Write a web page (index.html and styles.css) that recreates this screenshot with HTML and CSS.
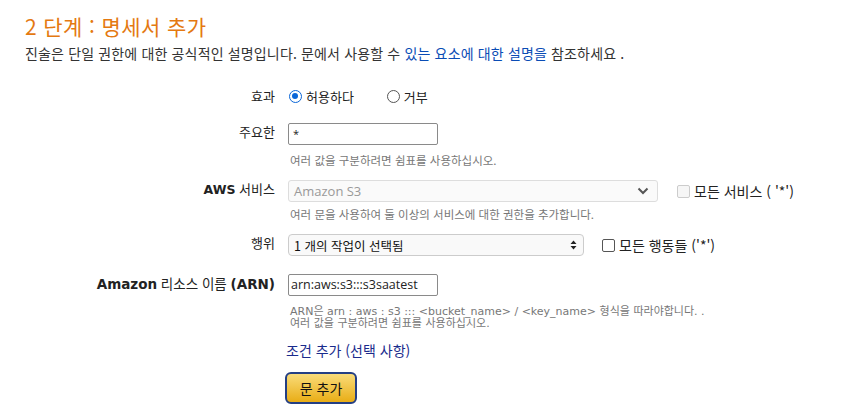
FILE: index.html
```html
<!DOCTYPE html>
<html lang="ko">
<head>
<meta charset="utf-8">
<link rel="stylesheet" href="styles.css">
</head>
<body>
<div class="page">
  <h1 class="title">2 단계 : 명세서 추가</h1>
  <p class="desc">진술은 단일 권한에 대한 공식적인 설명입니다. 문에서 사용할 수 <a class="desc-link">있는 요소에 대한 설명을</a> 참조하세요 .</p>

  <div class="form">
    <div class="row row-effect">
      <div class="label">효과</div>
      <div class="field radios">
        <span class="radio checked"></span><span class="radio-text">허용하다</span>
        <span class="radio deny"></span><span class="radio-text">거부</span>
      </div>
    </div>

    <div class="row row-principal">
      <div class="label">주요한</div>
      <div class="field">
        <div class="input"><span class="star">*</span></div>
        <div class="hint hint-1">여러 값을 구분하려면 쉼표를 사용하십시오.</div>
      </div>
    </div>

    <div class="row row-service">
      <div class="label"><b>AWS</b> 서비스</div>
      <div class="field">
        <div class="inline">
          <div class="select select-disabled">
            <span>Amazon S3</span>
            <svg width="12" height="8" viewBox="0 0 12 8"><path d="M1.5 1.5 L6 6 L10.5 1.5" fill="none" stroke="#555" stroke-width="2"/></svg>
          </div>
          <span class="check check-disabled"></span><span class="check-text">모든 서비스 ( '*')</span>
        </div>
        <div class="hint hint-2">여러 문을 사용하여 둘 이상의 서비스에 대한 권한을 추가합니다.</div>
      </div>
    </div>

    <div class="row row-action">
      <div class="label">행위</div>
      <div class="field">
        <div class="inline">
          <div class="select select-action">
            <span>1 개의 작업이 선택됨</span>
            <svg width="7" height="10" viewBox="0 0 7 10"><path d="M3.5 0.5 L6.5 4 L0.5 4 Z M3.5 9.5 L6.5 6 L0.5 6 Z" fill="#222"/></svg>
          </div>
          <span class="check check-action"></span><span class="check-text">모든 행동들 ('*')</span>
        </div>
      </div>
    </div>

    <div class="row row-arn">
      <div class="label"><b>Amazon</b> 리소스 이름 <b>(ARN)</b></div>
      <div class="field">
        <div class="input arn-input">arn:aws:s3:::s3saatest</div>
        <div class="hint hint-arn">ARN은 arn : aws : s3 ::: &lt;bucket_name&gt; / &lt;key_name&gt; 형식을 따라야합니다. .<br>여러 값을 구분하려면 쉼표를 사용하십시오.</div>
        <a class="cond">조건 추가 (선택 사항)</a>
        <button class="btn">문 추가</button>
      </div>
    </div>
  </div>
</div>
</body>
</html>
```

FILE: styles.css
```css
* { box-sizing: border-box; }
html, body { margin: 0; padding: 0; background: #fff; }
body {
  font-family: "Noto Sans CJK KR", "Noto Sans", sans-serif;
  color: #222;
  width: 864px;
  height: 420px;
  overflow: hidden;
}
.page { padding: 13px 0 0 25px; }
.title {
  margin: 0;
  font-size: 21px;
  line-height: 26px;
  font-weight: normal;
  color: #e47911;
  font-family: "Noto Sans CJK KR", sans-serif;
  letter-spacing: 0.4px;
}
.desc {
  margin: 4px 0 0 0;
  font-size: 14px;
  line-height: 20px;
  color: #333;
  letter-spacing: 0.15px;
}
.desc-link { color: #0a4cb5; }
.form { margin-top: 21px; }
.row { display: flex; align-items: flex-start; }
.label {
  width: 263px;
  padding-right: 13px;
  text-align: right;
  font-size: 13px;
  line-height: 18px;
  color: #222;
  flex: none;
}
.label b { font-family: "DejaVu Sans", sans-serif; font-weight: bold; font-size: 12.5px; }
.row-arn .label { font-size: 13.5px; }
.row-arn .label b { font-size: 13.5px; }
.field { flex: none; }
.row-effect { height: 24px; align-items: center; }
.row-effect .label { line-height: 24px; }
.radios { display: flex; align-items: center; height: 24px; font-size: 13px; }
.radio {
  width: 13px; height: 13px; border-radius: 50%;
  border: 1px solid #555; background: #fff; margin-left: 1px;
  display: inline-block; position: relative;
}
.radio.checked { border: 1.5px solid #0a66d8; }
.radio.checked::after {
  content: ""; position: absolute; left: 2px; top: 2px;
  width: 6px; height: 6px; border-radius: 50%; background: #0a66d8;
}
.radio-text { margin-left: 4px; }
.radio.deny { margin-left: 33px; }
.row-principal { margin-top: 15px; }
.input {
  width: 150px; height: 22px;
  border: 1px solid #8a8a8a; border-radius: 2px;
  font-size: 12px; padding: 0 4px; line-height: 20px;
  font-family: "Open Sans", sans-serif;
}
.star { font-size: 11px; }
.hint {
  font-size: 11.5px; color: #777; line-height: 14px;
  margin-left: 2px;
}
.hint-1 { margin-top: 8px; }
.row-service { margin-top: 13px; }
.inline { display: flex; align-items: center; }
.select {
  height: 22px; display: flex; align-items: center; justify-content: space-between;
  font-size: 13px; border-radius: 3px;
}
.select-disabled {
  width: 370px; border: 1px solid #ddd; background: #fafafa;
  color: #999; padding: 0 8px 0 5px;
  font-family: "Open Sans", sans-serif;
}
.check {
  width: 13px; height: 13px; border-radius: 2px; border: 1px solid #555;
  background: #fff; display: inline-block; flex: none;
}
.check-disabled { margin-left: 19px; border-color: #ccc; background: #f6f6f6; }
.check-text { margin-left: 4px; font-size: 14px; color: #222; }
.hint-2 { margin-top: 5px; }
.row-action { margin-top: 13px; }
.select-action {
  width: 296px; border: 1px solid #ccc; background: #f9f9f9;
  color: #111; padding: 0 6px 0 5px; border-radius: 4px;
  font-size: 12.5px;
}
.check-action { margin-left: 18px; }
.row-arn { margin-top: 18px; }
.arn-input { font-size: 12.5px; color: #222; padding: 0 2px; }
.hint-arn { margin-top: 10px; line-height: 12px; font-family: "DejaVu Sans", "Noto Sans CJK KR", sans-serif; font-size: 11px; }
.cond {
  display: block; margin-top: 11px; margin-left: -2px;
  font-size: 14px; line-height: 18px; color: #1a2b8c;
}
.btn {
  display: block; margin-top: 13px; margin-left: -3px;
  width: 72px; height: 32px;
  border: 2px solid #243f84; border-radius: 6px;
  background: linear-gradient(#f9dc7a, #e9ad16);
  font-family: "Noto Sans CJK KR", sans-serif;
  font-size: 14px; color: #111; padding: 0;
}
```
